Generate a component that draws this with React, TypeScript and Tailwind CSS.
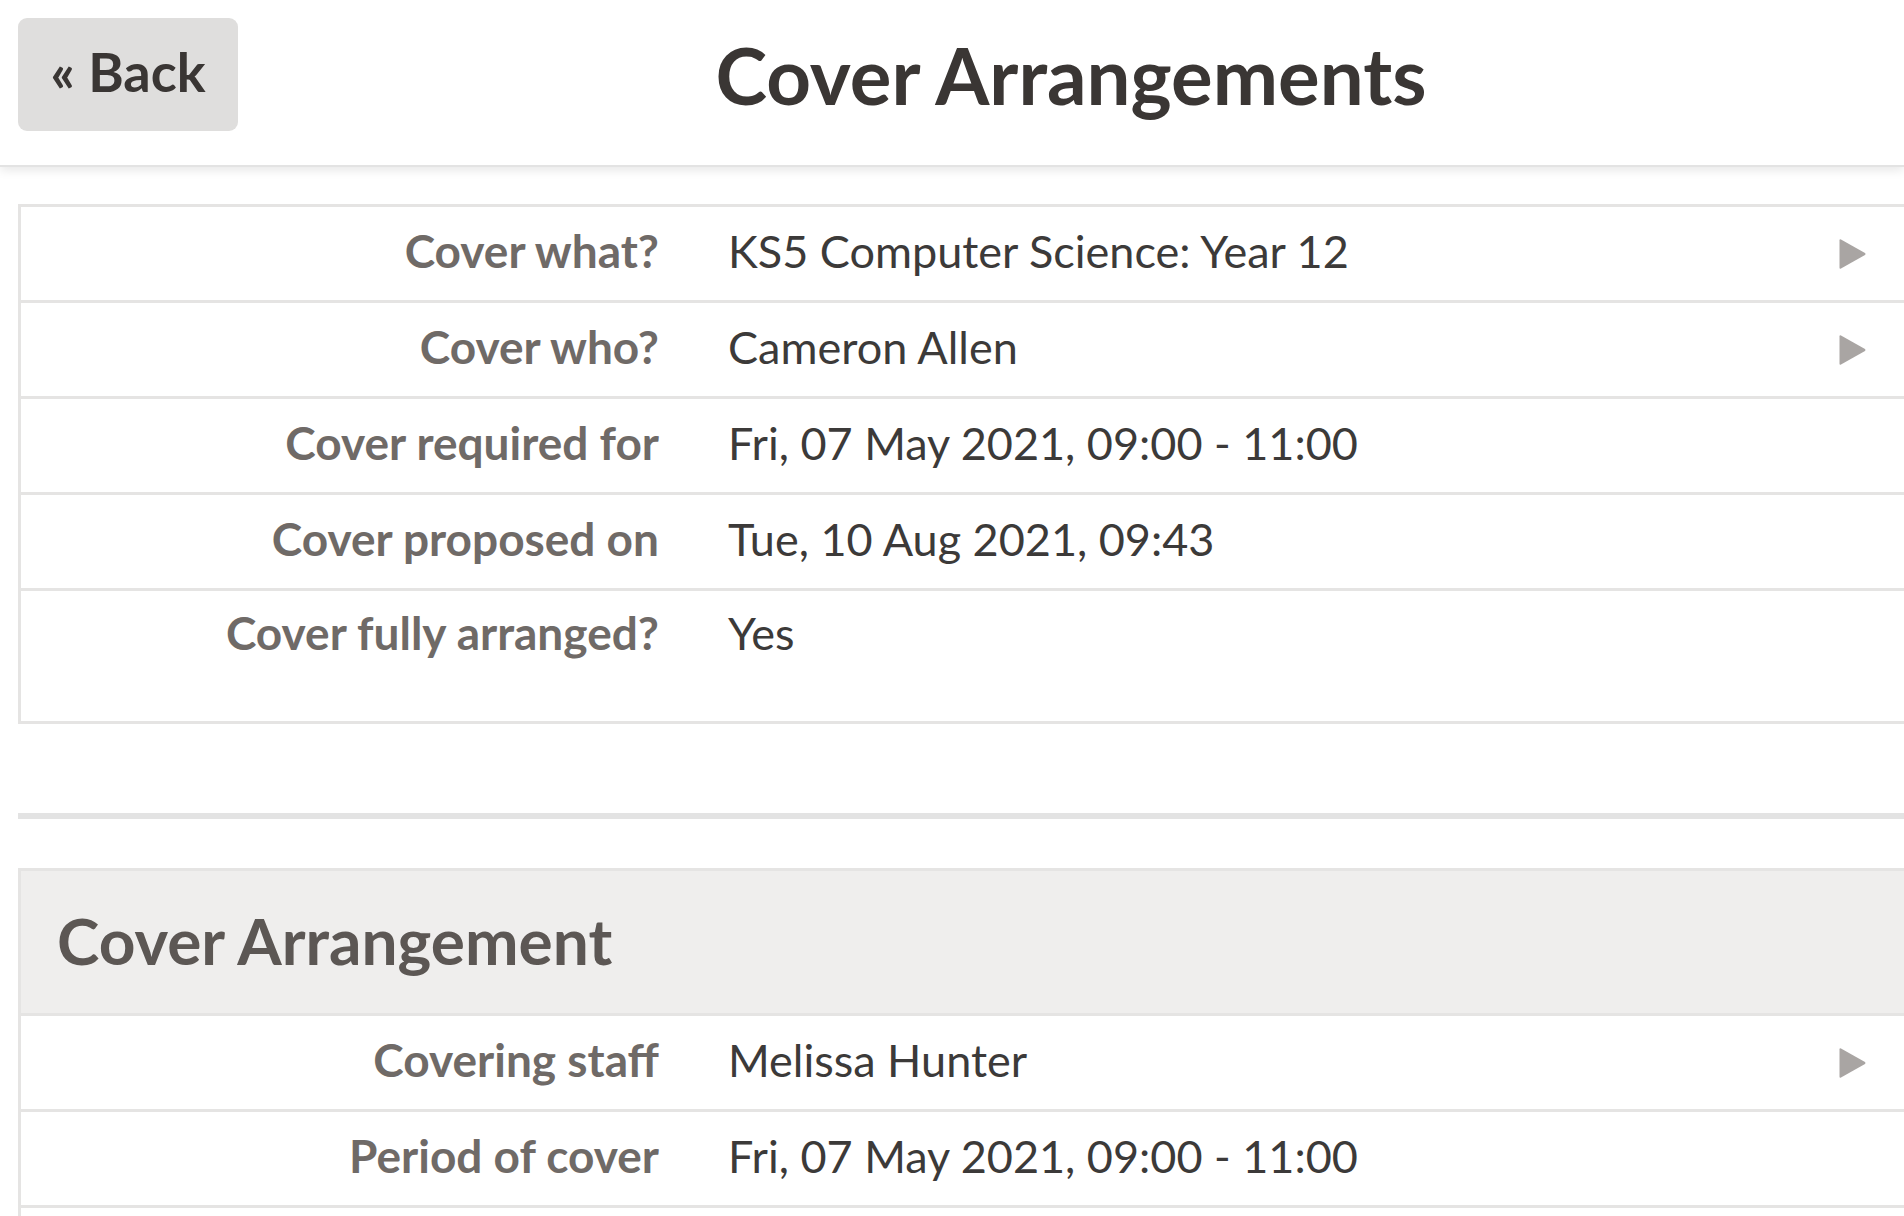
import type { ReactNode } from "react";

type Row = { label: string; value: string; link?: boolean };

const summary: Row[] = [
  { label: "Cover what?", value: "KS5 Computer Science: Year 12", link: true },
  { label: "Cover who?", value: "Cameron Allen", link: true },
  { label: "Cover required for", value: "Fri, 07 May 2021, 09:00 - 11:00" },
  { label: "Cover proposed on", value: "Tue, 10 Aug 2021, 09:43" },
  { label: "Cover fully arranged?", value: "Yes" },
];

const arrangement: Row[] = [
  { label: "Covering staff", value: "Melissa Hunter", link: true },
  { label: "Period of cover", value: "Fri, 07 May 2021, 09:00 - 11:00" },
];

function Arrow() {
  return (
    <svg width="30" height="36" viewBox="0 0 30 36" className="shrink-0" aria-hidden="true">
      <path d="M3 3.5 L27 17 Q28 18 27 19 L3 32.5 Q1.5 33.3 1.5 31.5 L1.5 4.5 Q1.5 2.7 3 3.5 Z" fill="#a9a5a3" />
    </svg>
  );
}

function DetailRow({ row, last }: { row: Row; last?: boolean }) {
  return (
    <div
      className={
        last
          ? "flex items-start h-[130px] pt-[12px]"
          : "flex items-center h-[96px] pb-[6px] border-b-[3px] border-[#e5e4e3]"
      }
    >
      <div className="w-[638px] shrink-0 text-right font-bold text-[46px] leading-[60px] text-[#6f6a67]">
        {row.label}
      </div>
      <div className="flex-1 pl-[69px] text-[45px] leading-[60px] text-[#3c3a39]">{row.value}</div>
      <div className="w-[110px] pr-[73px] pt-[6px] flex justify-end">{row.link ? <Arrow /> : null}</div>
    </div>
  );
}

function Panel({ children }: { children: ReactNode }) {
  return (
    <div className="ml-[18px] mr-[-40px] border-[3px] border-[#e5e4e3] bg-white">{children}</div>
  );
}

export default function App() {
  return (
    <div className="h-[1216px] bg-white overflow-hidden font-['Lato','Open_Sans',sans-serif]">
      <header className="flex items-center pl-[18px] pt-[18px] pb-[34px] border-b-[2px] border-[#e3e3e3] shadow-[0_3px_10px_rgba(0,0,0,0.10)] relative">
        <button className="w-[220px] h-[113px] shrink-0 rounded-[9px] bg-[#dfdedd] text-[#3a3634] font-bold text-[54px] leading-none pb-[6px]">
          « Back
        </button>
        <h1 className="flex-1 text-center font-bold text-[78px] leading-none text-[#3a3634]">
          Cover Arrangements
        </h1>
      </header>

      <main className="pt-[37px]">
        <Panel>
          {summary.map((r, i) => (
            <DetailRow key={r.label} row={r} last={i === summary.length - 1} />
          ))}
        </Panel>

        <hr className="ml-[18px] mt-[89px] mb-[49px] border-0 h-[6px] bg-[#e3e3e3]" />

        <Panel>
          <div className="h-[145px] flex items-center pl-[36px] pb-[2px] bg-[#efeeed] border-b-[3px] border-[#e5e4e3]">
            <h2 className="font-bold text-[64px] leading-none text-[#5c5754]">Cover Arrangement</h2>
          </div>
          {arrangement.map((r) => (
            <DetailRow key={r.label} row={r} />
          ))}
          <div className="h-[96px]" />
        </Panel>
      </main>
    </div>
  );
}
